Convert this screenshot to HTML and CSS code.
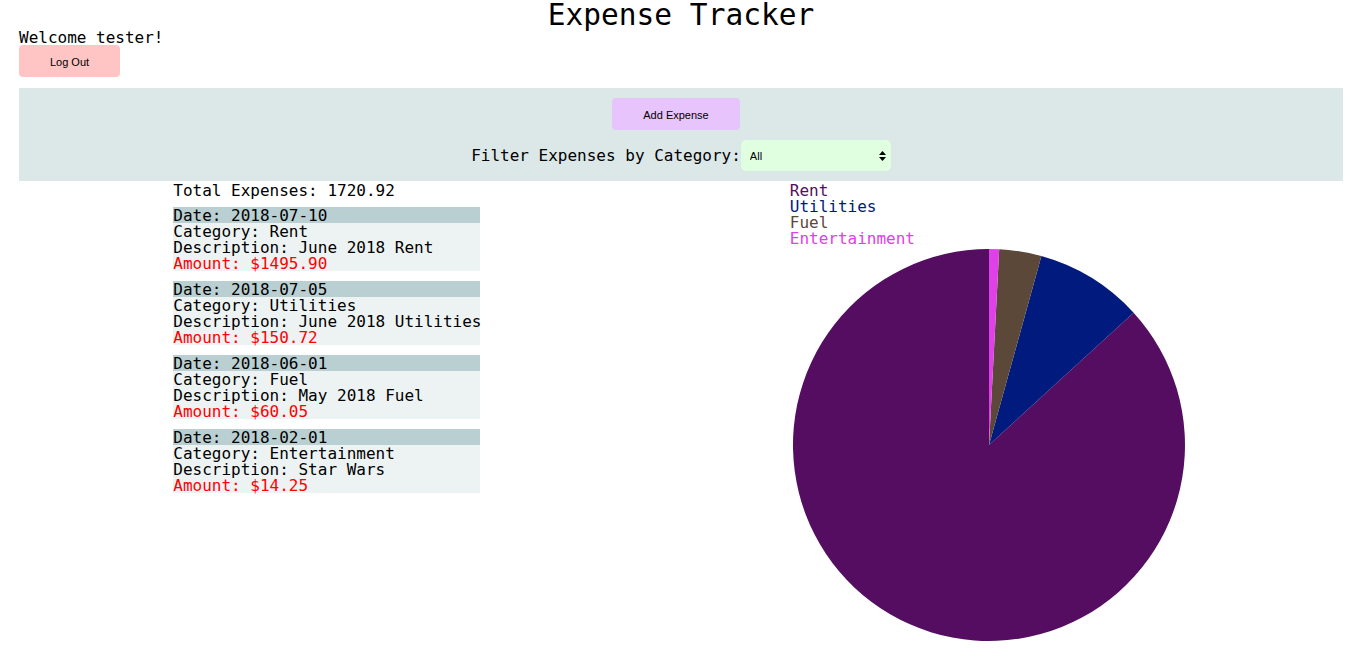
FILE: index.html
```html
<!DOCTYPE html>
<html>
<head>
<meta charset="utf-8">
<link rel="stylesheet" href="styles.css">
</head>
<body>
<div class="app">
  <h1 class="title">Expense Tracker</h1>
  <div class="welcome">Welcome tester!</div>
  <button class="btn btn-logout">Log Out</button>
  <div class="toolbar">
    <button class="btn btn-add">Add Expense</button>
    <div class="filter">
      <label class="filter-label">Filter Expenses by Category:</label>
      <div class="select-wrap">
        <select class="select">
          <option>All</option>
          <option>Rent</option>
          <option>Utilities</option>
          <option>Fuel</option>
          <option>Entertainment</option>
        </select>
        <svg class="select-arrows" width="7" height="10" viewBox="0 0 7 10"><path d="M3.5 0 L7 4 L0 4 Z M0 6 L7 6 L3.5 10 Z" fill="#000"/></svg>
      </div>
    </div>
  </div>
  <div class="main">
    <div class="list">
      <div class="total">Total Expenses: 1720.92</div>
      <div class="card">
        <div class="card-date">Date: 2018-07-10</div>
        <div class="card-line">Category: Rent</div>
        <div class="card-line">Description: June 2018 Rent</div>
        <div class="card-line amount">Amount: $1495.90</div>
      </div>
      <div class="card">
        <div class="card-date">Date: 2018-07-05</div>
        <div class="card-line">Category: Utilities</div>
        <div class="card-line">Description: June 2018 Utilities</div>
        <div class="card-line amount">Amount: $150.72</div>
      </div>
      <div class="card">
        <div class="card-date">Date: 2018-06-01</div>
        <div class="card-line">Category: Fuel</div>
        <div class="card-line">Description: May 2018 Fuel</div>
        <div class="card-line amount">Amount: $60.05</div>
      </div>
      <div class="card">
        <div class="card-date">Date: 2018-02-01</div>
        <div class="card-line">Category: Entertainment</div>
        <div class="card-line">Description: Star Wars</div>
        <div class="card-line amount">Amount: $14.25</div>
      </div>
    </div>
    <div class="chart">
      <div class="legend">
        <div class="legend-item c-rent">Rent</div>
        <div class="legend-item c-util">Utilities</div>
        <div class="legend-item c-fuel">Fuel</div>
        <div class="legend-item c-ent">Entertainment</div>
      </div>
      <svg class="pie" width="400" height="398" viewBox="0 0 400 398">
        <g transform="translate(200,198)">
          <path d="M0 0 L0 -196 A196 196 0 1 0 144.6 -132.3 Z" fill="#540d61"/>
          <path d="M0 0 L144.6 -132.3 A196 196 0 0 0 52.4 -188.9 Z" fill="#001b7d"/>
          <path d="M0 0 L52.4 -188.9 A196 196 0 0 0 10.2 -195.7 Z" fill="#5c4838"/>
          <path d="M0 0 L10.2 -195.7 A196 196 0 0 0 0 -196 Z" fill="#e040e8"/>
        </g>
      </svg>
    </div>
  </div>
</div>
</body>
</html>
```

FILE: styles.css
```css
html, body {
  margin: 0;
  padding: 0;
  background: #fff;
}

.app {
  padding: 0 15px 0 19px;
  font-family: "DejaVu Sans Mono", monospace;
  color: #000;
  font-size: 16px;
  line-height: 16px;
}

.title {
  margin: 0;
  text-align: center;
  font-weight: normal;
  font-size: 29.5px;
  line-height: 30px;
  height: 30px;
}

.welcome {
  height: 15px;
  line-height: 16px;
}

.btn {
  display: block;
  border: none;
  border-radius: 4px;
  font-family: "Liberation Sans", Arial, sans-serif;
  font-size: 11px;
  color: #000;
  height: 32px;
  padding: 0;
  cursor: pointer;
}

.btn-logout {
  width: 101px;
  background: #ffc4c4;
  padding-top: 2px;
}

.toolbar {
  margin-top: 11px;
  background: #dce7e7;
  padding: 10px 0;
  display: flex;
  flex-direction: column;
  align-items: center;
  gap: 10px;
}

.btn-add {
  width: 128px;
  background: #e8c4fc;
  margin-right: 10px;
  padding-top: 2px;
}

.filter {
  display: flex;
  align-items: center;
}

.filter-label {
  line-height: 16px;
}

.select-wrap {
  position: relative;
  width: 150px;
  height: 31px;
}

.select {
  appearance: none;
  -webkit-appearance: none;
  width: 150px;
  height: 31px;
  border: none;
  border-radius: 5px;
  background: #e0ffe0;
  font-family: "Liberation Sans", Arial, sans-serif;
  font-size: 11px;
  padding: 0 0 0 9px;
  color: #000;
}

.select-arrows {
  position: absolute;
  right: 5px;
  top: 11px;
  pointer-events: none;
}

.main {
  display: flex;
  justify-content: space-around;
  align-items: flex-start;
}

.list {
  width: 307px;
}

.total {
  height: 16px;
  line-height: 18px;
  margin-top: 1px;
}

.card {
  margin-top: 9px;
  background: #edf3f3;
  width: 307px;
}

.card + .card {
  margin-top: 10px;
}

.card-date {
  background: #b9cfd1;
  height: 16px;
  line-height: 18px;
}

.card-line {
  height: 16px;
  line-height: 18px;
  white-space: nowrap;
}

.amount {
  color: #ff0000;
}

.chart {
  width: 400px;
}

.legend {
  margin-top: 1px;
  padding-left: 1px;
}

.legend-item {
  height: 16px;
  line-height: 18px;
}

.c-rent { color: #540d61; }
.c-util { color: #001b7d; }
.c-fuel { color: #5c4838; }
.c-ent { color: #e040e8; }

.pie {
  display: block;
  margin-top: 1px;
}
```
